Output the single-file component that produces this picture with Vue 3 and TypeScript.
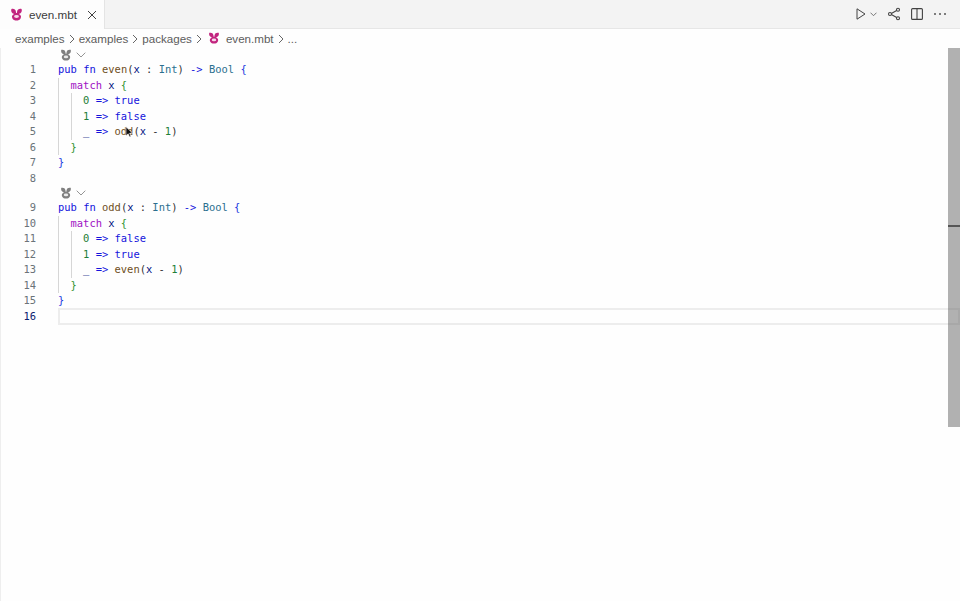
<script setup lang="ts">
type Tok = { t: string; c: string }
type Line = { n: number; toks: Tok[]; lens?: boolean; indent: number }
const k = (t: string) => ({ t, c: 'kw' })
const f = (t: string) => ({ t, c: 'fn' })
const v = (t: string) => ({ t, c: 'var' })
const ty = (t: string) => ({ t, c: 'ty' })
const m = (t: string) => ({ t, c: 'ctl' })
const d = (t: string) => ({ t, c: 'lit' })
const p = (t: string) => ({ t, c: 'pl' })
const g = (t: string) => ({ t, c: 'br2' })
const b = (t: string) => ({ t, c: 'br1' })

const logoPath = 'M1.500 1C3.500 .5 6 .8 6.400 4L6.600 5.500H7.400L7.600 4C8 .8 10.500 .5 12.500 1C13.200 3 12.500 5.500 9.500 6.500C11.500 7.500 12.500 9 11.500 11C10.500 13 9 13.500 7 13.500S3.500 13 2.500 11C1.500 9 2.500 7.500 4.500 6.500C1.500 5.500 .8 3 1.500 1z'

function fnLines(start: number, name: string, other: string, a: string, c: string): Line[] {
  return [
    { n: start, lens: true, indent: 0, toks: [k('pub'), p(' '), k('fn'), p(' '), f(name), p('('), v('x'), p(' : '), ty('Int'), p(') '), k('->'), p(' '), ty('Bool'), p(' '), b('{')] },
    { n: start + 1, indent: 1, toks: [m('match'), p(' '), v('x'), p(' '), g('{')] },
    { n: start + 2, indent: 2, toks: [d('0'), p(' '), k('=>'), p(' '), k(a)] },
    { n: start + 3, indent: 2, toks: [d('1'), p(' '), k('=>'), p(' '), k(c)] },
    { n: start + 4, indent: 2, toks: [v('_'), p(' '), k('=>'), p(' '), f(other), p('('), v('x'), p(' - '), d('1'), p(')')] },
    { n: start + 5, indent: 1, toks: [g('}')] },
    { n: start + 6, indent: 0, toks: [b('}')] },
  ]
}
const lines: Line[] = [
  ...fnLines(1, 'even', 'odd', 'true', 'false'),
  { n: 8, indent: 0, toks: [] },
  ...fnLines(9, 'odd', 'even', 'false', 'true'),
  { n: 16, indent: 0, toks: [] },
]
const crumbs = ['examples', 'examples', 'packages']
</script>

<template>
  <div class="app">
    <header class="tabbar">
      <div class="tab">
        <svg class="logo" viewBox="0 0 14 14" width="13" height="13">
          <path :d="logoPath" fill="#c2257f"/>
          <ellipse cx="7" cy="9.200" rx="2.600" ry="1.600" fill="#f6d9ea"/>
        </svg>
        <span class="tabname">even.mbt</span>
        <svg class="close" viewBox="0 0 10 10" width="10" height="10"><path d="M1 1l8 8M9 1l-8 8" stroke="#424242" stroke-width="1" fill="none"/></svg>
      </div>
      <div class="actions">
        <svg viewBox="0 0 10 12" width="10" height="12"><path d="M1 .8l8 5.200-8 5.200z" stroke="#424242" stroke-width="1" fill="none" stroke-linejoin="round"/></svg>
        <svg class="chev" viewBox="0 0 7 5" width="7" height="5"><path d="M.5.700L3.500 3.700l3-3" stroke="#666" stroke-width=".9" fill="none"/></svg>
        <svg class="share" viewBox="0 0 14 14" width="14" height="14"><path d="M10.500 3L3.500 7l7 4" stroke="#424242" stroke-width="1.100" fill="none"/><circle cx="11" cy="2.800" r="1.500" fill="#f3f3f3" stroke="#424242" stroke-width="1.100"/><circle cx="3" cy="7" r="1.500" fill="#f3f3f3" stroke="#424242" stroke-width="1.100"/><circle cx="11" cy="11.200" r="1.500" fill="#f3f3f3" stroke="#424242" stroke-width="1.100"/></svg>
        <svg class="split" viewBox="0 0 12 12" width="12" height="12"><rect x=".6" y=".6" width="10.800" height="10.800" rx="1" stroke="#424242" stroke-width="1.100" fill="none"/><path d="M6 .6v10.800" stroke="#424242" stroke-width="1.100"/></svg>
        <div class="dots"><i></i><i></i><i></i></div>
      </div>
    </header>

    <nav class="crumbs">
      <template v-for="(c, i) in crumbs" :key="i">
        <span>{{ c }}</span>
        <svg class="sep" viewBox="0 0 6 10" width="6" height="10"><path d="M1 1l4 4-4 4" stroke="#555" stroke-width=".9" fill="none"/></svg>
      </template>
      <svg class="crumblogo" viewBox="0 0 14 14" width="12" height="12">
        <path :d="logoPath" fill="#c2257f"/>
        <ellipse cx="7" cy="9.200" rx="2.600" ry="1.600" fill="#f6d9ea"/>
      </svg>
      <span>even.mbt</span>
      <svg class="sep" viewBox="0 0 6 10" width="6" height="10"><path d="M1 1l4 4-4 4" stroke="#555" stroke-width=".9" fill="none"/></svg>
      <span>...</span>
    </nav>

    <main class="editor">
      <div class="code">
        <template v-for="l in lines" :key="l.n">
          <div v-if="l.lens" class="lens" :class="{ tight: l.n > 1 }">
            <svg viewBox="0 0 14 14" width="12" height="12">
              <path :d="logoPath" fill="#808080"/>
              <ellipse cx="7" cy="9.200" rx="2.600" ry="1.600" fill="#eaeaea"/>
            </svg>
            <svg class="lenschev" viewBox="0 0 10 6" width="10" height="6"><path d="M.7.700L5 5l4.300-4.300" stroke="#888" stroke-width=".9" fill="none"/></svg>
          </div>
          <div class="line" :class="{ current: l.n === 16 }">
            <span class="num" :class="{ active: l.n === 16 }">{{ l.n }}</span>
            <div class="text">
              <i v-for="i in l.indent" :key="i" class="guide" :style="{ left: (i - 1) * 12.54 + 'px' }"></i>
              <span class="content" :style="{ paddingLeft: l.indent * 12.54 + 'px' }"><span v-for="(t, idx) in l.toks" :key="idx" :class="t.c">{{ t.t }}</span></span>
            </div>
          </div>
        </template>
      </div>
      <aside class="scroll"><div class="thumb"><i></i></div></aside>
      <svg class="cursor" viewBox="0 0 8 12" width="8" height="12"><path d="M1 .8v9l2.200-2 1.400 3.200 1.400-.6L4.600 7.300l2.900-.2z" fill="#111" stroke="#fff" stroke-width=".6"/></svg>
    </main>
  </div>
</template>

<style>
html, body { margin: 0; background: #fff; }
</style>

<style scoped>
.app { width: 960px; height: 601px; display: flex; flex-direction: column; overflow: hidden; background: #fefefe; font-family: "Liberation Sans", Arial, sans-serif; color: #444; }
.tabbar { height: 28px; flex: none; display: flex; justify-content: space-between; background: #f3f3f3; border-bottom: 1px solid #e6e6e6; }
.tab { width: 105px; background: #fdfdfd; border-right: 1px solid #e4e4e4; height: 29px; display: flex; align-items: center; padding-left: 10px; box-sizing: border-box; }
.tabname { font-size: 11.700px; margin-left: 6px; color: #3c3c3c; }
.close { margin-left: 10px; }
.actions { display: flex; align-items: center; padding-right: 14px; }
.chev { margin-left: 4px; }
.share { margin-left: 10px; }
.split { margin-left: 10px; }
.dots { display: flex; gap: 3px; margin-left: 11px; }
.dots i { width: 2px; height: 2px; border-radius: 50%; background: #555; }
.crumbs { height: 19px; flex: none; display: flex; align-items: center; padding-left: 15px; font-size: 11.600px; color: #5c5c5c; }
.sep { margin: 0 4px; }
.crumblogo { margin: 0 6px 1px 2px; }
.editor { flex: 1; position: relative; border-left: 1px solid #eee; min-height: 0; }
.code { font-family: "DejaVu Sans Mono", monospace; font-size: 10.450px; }
.lens { height: 14px; margin-left: 59px; display: flex; align-items: center; }
.lens.tight { height: 13.500px; }
.lenschev { margin-left: 4px; }
.line { height: 15.570px; line-height: 15.570px; display: flex; white-space: pre; }
.num { width: 35px; text-align: right; color: #6a7378; flex: none; }
.num.active { color: #0b216f; }
.text { flex: 1; margin-left: 22px; position: relative; height: 100%; }
.current .text { box-sizing: border-box; border: 2px solid #ededed; height: 17px; margin-top: -1px; }
.guide { position: absolute; top: 0; bottom: 0; width: 1px; background: #d6d6d6; }
.kw { color: #1414dc; }
.fn { color: #6e4e22; }
.var { color: #001080; }
.ty { color: #2a6f8e; }
.ctl { color: #a012c4; }
.lit { color: #1f7f3a; }
.pl { color: #333; }
.br1 { color: #1a3ae0; }
.br2 { color: #319331; }
.scroll { position: absolute; top: 0; right: 0; width: 12px; }
.thumb { height: 379px; background: rgba(100, 100, 100, 0.5); position: relative; }
.thumb i { position: absolute; left: 0; right: 0; top: 177px; height: 2px; background: #555; }
.cursor { position: absolute; left: 124px; top: 78px; }
</style>
